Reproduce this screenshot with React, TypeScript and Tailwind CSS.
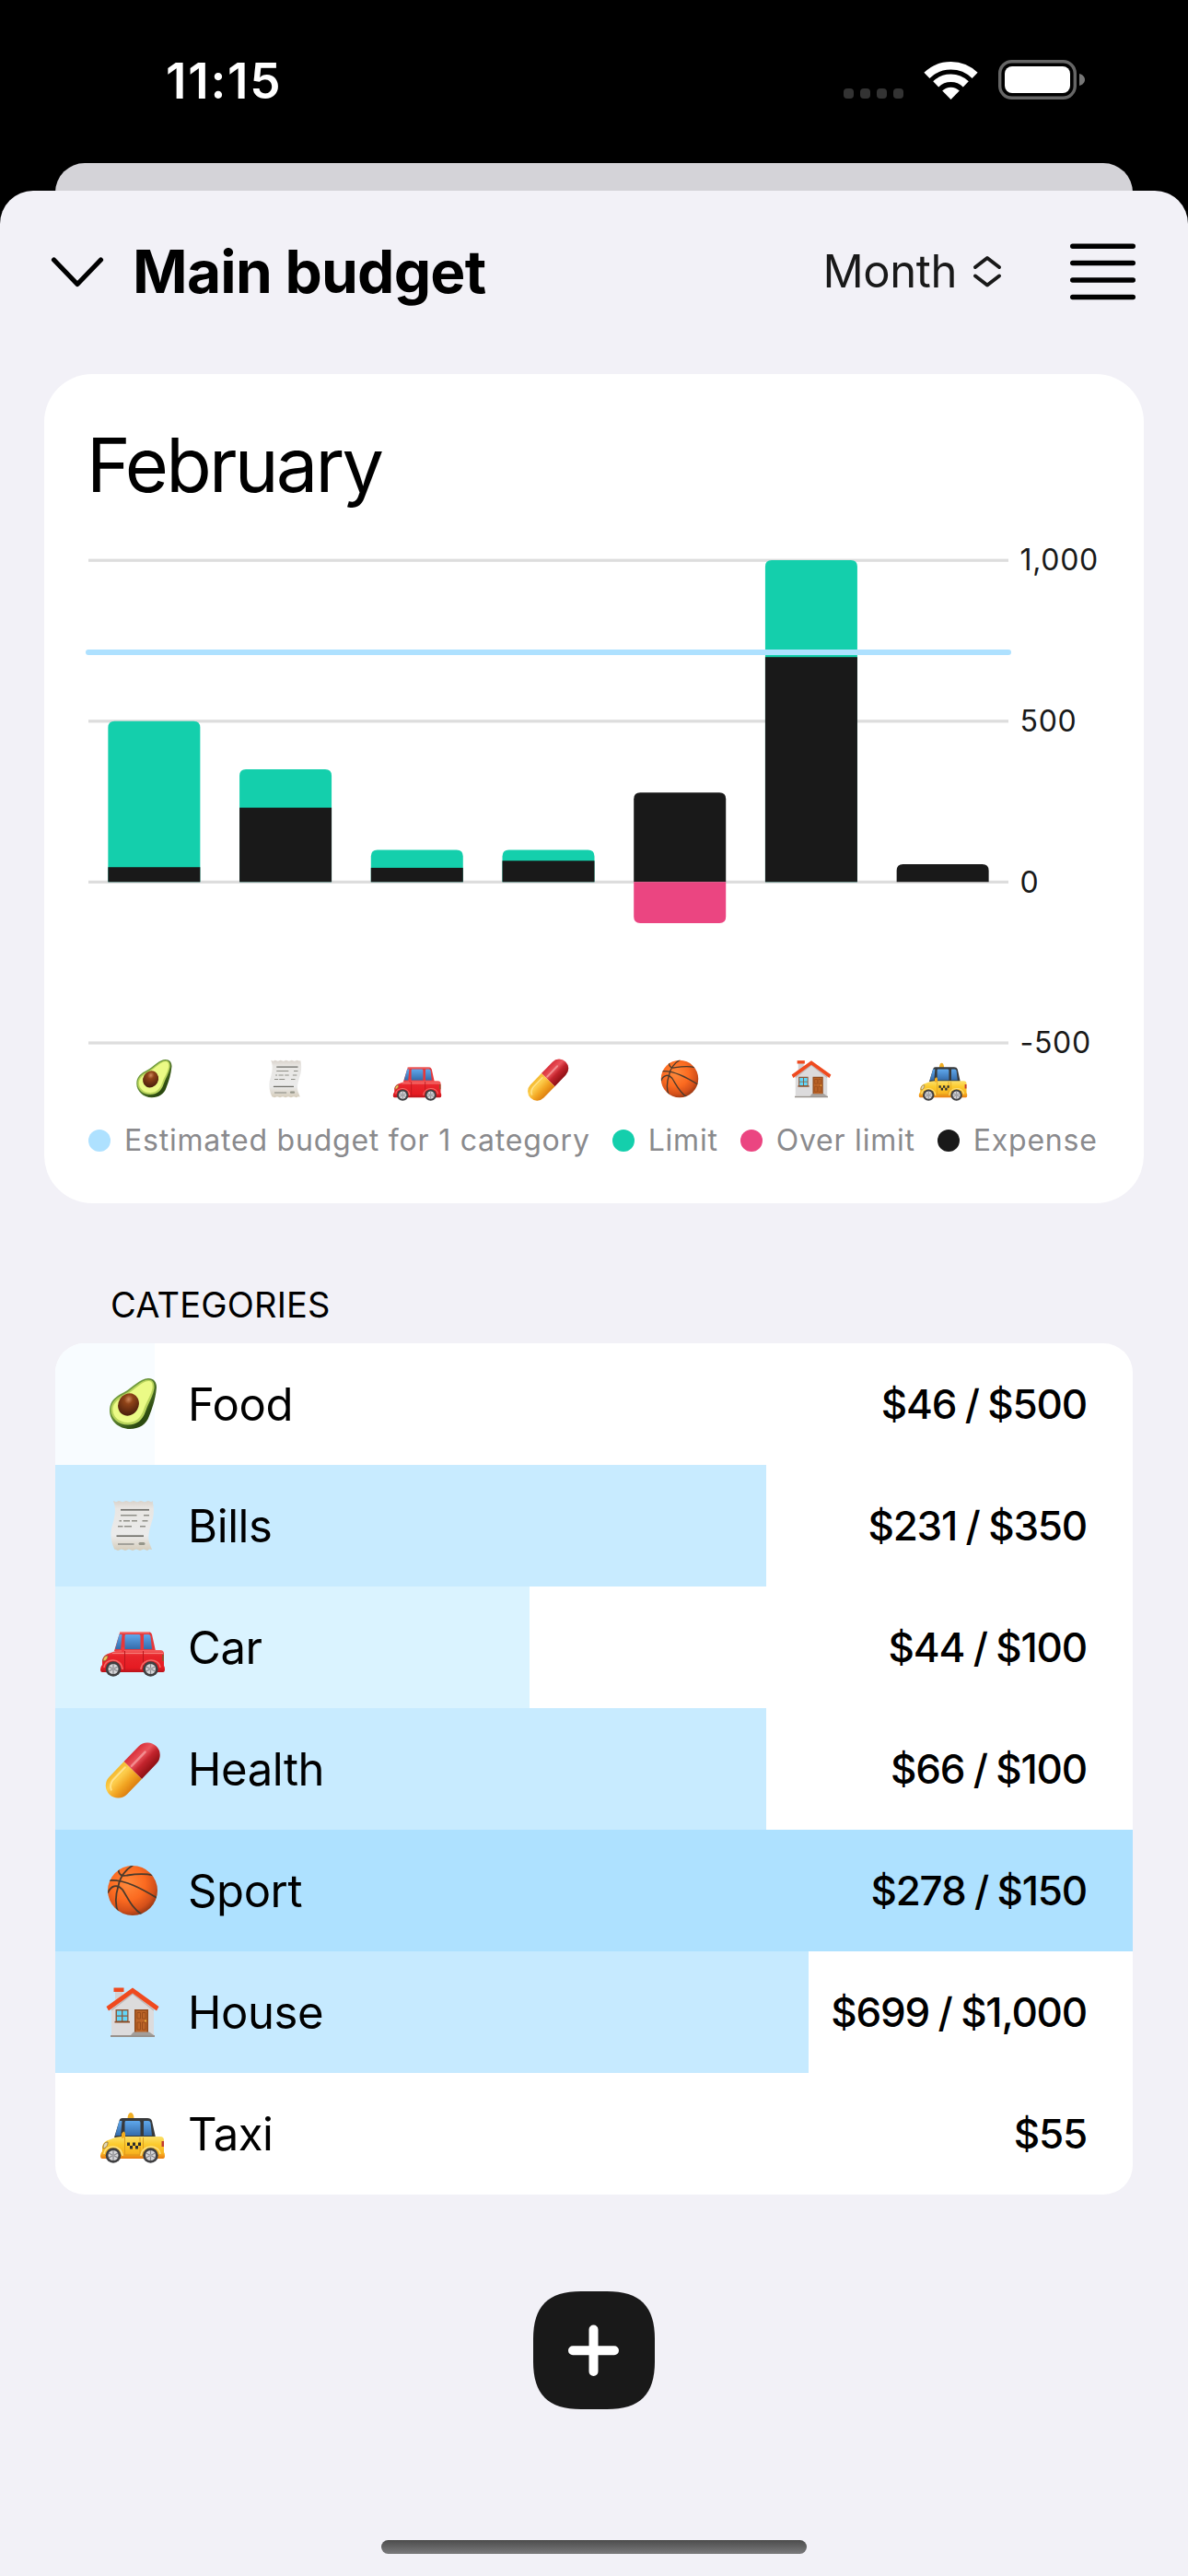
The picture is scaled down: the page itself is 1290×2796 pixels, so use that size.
import type { ReactNode } from "react";
import { clsx } from "clsx";

type IconProps = {
    className?: string
}

type Category = {
    name: string
    spent: number
    limit?: number
    tint: string
    Icon: (props: IconProps) => ReactNode
}

const AvocadoIcon = ({ className }: IconProps) => (
    <svg viewBox="0 0 72 72" className={className}>
        <defs>
            <radialGradient id="avocadoPit" cx="0.38" cy="0.3" r="0.7">
                <stop offset="0" stopColor="#d08a5c" />
                <stop offset="0.3" stopColor="#8f4318" />
                <stop offset="1" stopColor="#4c1f0c" />
            </radialGradient>
            <linearGradient id="avocadoSkin" x1="0" y1="0" x2="1" y2="1">
                <stop offset="0.35" stopColor="#6f9a3d" />
                <stop offset="0.75" stopColor="#2c4a10" />
            </linearGradient>
        </defs>
        <path d="M53 8C59 8 62 12 62 18C61 29 58 39 54 49C51 58 43 63 33 63C21 63 11 54 11 43C11 33 17 28 27 23C36 18 44 8 53 8Z" fill="url(#avocadoSkin)" />
        <path d="M53 9.5C58 9.5 60 13 59.500 19C58 28 53 35 50 44C47 53 41 58.500 31 58.500C20 58.500 12.500 51 12.500 42.500C12.500 34 18 29.500 28 24.500C37 19.500 45 9.500 53 9.500Z" fill="#b9d45c" />
        <path d="M53 11C57 11 58 14 57.500 19C56 27 50.500 34 48 42C45 51 39 56 31 56C21 56 14.500 49.500 14.500 42C14.500 35 20 31 29 26C38 21 46 11 53 11Z" fill="#ebfa86" />
        <ellipse cx="31.500" cy="36.500" rx="11" ry="12.500" transform="rotate(30 31.500 36.500)" fill="url(#avocadoPit)" />
    </svg>
)

const ReceiptIcon = ({ className }: IconProps) => (
    <svg viewBox="0 0 72 72" className={className}>
        <defs>
            <linearGradient id="receiptPaper" x1="0" y1="0" x2="0" y2="1">
                <stop offset="0" stopColor="#d9d2ca" />
                <stop offset="0.15" stopColor="#e8e6e3" />
                <stop offset="0.7" stopColor="#ebebeb" />
                <stop offset="1" stopColor="#d5ccba" />
            </linearGradient>
        </defs>
        <path d="M15 9l3 1.300 3-1.300 4 1.300 4-1.300 4 1.300 4-1.300 4 1.300 4-1.300 4 1.300 4-1.300 3.500 1.300L57.500 9C59 15 59.500 21 58 28C55 38 52 46 54 54L57 62L54 61.500 52 63l-4-1.500-4 1.500-4-1.500-4 1.500-4-1.500-4 1.500-4-1.500-4 1.500-3.500-1.500L17 63C13 55 11.500 47 13 39C16 29 19 19 15 9Z" fill="url(#receiptPaper)" />
        <g stroke="#8f8f88" strokeWidth="1.500">
            <path d="M23 18.800H54" stroke="#6f6f69" strokeWidth="1.700" />
            <path d="M23 24.700H40.500M48 24.700H54" />
            <path d="M21.500 30.700H24M26 30.700H33M35 30.700H41M46.500 30.700H52.500" />
            <path d="M20 36.700H25.500M27 36.700H35M44 36.700H50" />
            <path d="M18.500 47.200H48" stroke="#6f6f69" strokeWidth="1.700" />
            <path d="M20 56H37.500" />
        </g>
        <rect x="42.500" y="54" width="7" height="3" rx="1.500" fill="#96968a" />
    </svg>
)

// Shared by the private car and the taxi, only colours and roof details differ
const Wheels = () => (
    <>
        {[15, 55.5].map((x) => (
            <g key={x}>
                <circle cx={x} cy="59.500" r="8.300" fill="#3f3f41" />
                <circle cx={x} cy="59.500" r="5.500" fill="#d6d6d9" />
                <path d={`M${x} 54V65M${x - 5} 57L${x + 5} 62M${x - 5} 62L${x + 5} 57`} stroke="#88888c" strokeWidth="1.200" />
                <circle cx={x} cy="59.500" r="1.800" fill="#a5a5a9" />
            </g>
        ))}
    </>
)

const CarWindows = () => (
    <>
        <path d="M21.500 22H24.500L23 38H17Z" fill="url(#carGlass)" />
        <path d="M28.500 22H43Q44.500 22 44.500 24V38H27.500V24Q27.500 22 28.500 22Z" fill="url(#carGlass)" />
        <path d="M48.500 22H53Q55 22 55.500 24L57 38H48V24Q48 22 48.500 22Z" fill="url(#carGlass)" />
    </>
)

const CarIcon = ({ className }: IconProps) => (
    <svg viewBox="0 0 72 72" className={className}>
        <defs>
            <linearGradient id="carGlass" x1="0" y1="0" x2="0" y2="1">
                <stop offset="0" stopColor="#5fa8ec" />
                <stop offset="1" stopColor="#356cab" />
            </linearGradient>
            <linearGradient id="carBody" x1="0" y1="0" x2="0" y2="1">
                <stop offset="0" stopColor="#f4605f" />
                <stop offset="0.25" stopColor="#e8262c" />
                <stop offset="0.8" stopColor="#e51b22" />
                <stop offset="1" stopColor="#b8131a" />
            </linearGradient>
        </defs>
        <path d="M25 19H52Q56 19 57 22L61 40H16L21.500 22Q22 19 25 19Z" fill="#e5383b" />
        <path d="M22 19.800H54" stroke="#f58b88" strokeWidth="1.500" />
        <CarWindows />
        <path d="M12 42Q18 39 24 39H66Q70 39 70 43V56Q71 57 71 60Q71 63 69 63H3Q1 63 1 60Q1 57 3 55V50Q4 44 12 42Z" fill="url(#carBody)" />
        <path d="M14 42.500H69" stroke="#f77d78" strokeWidth="1.200" />
        <path d="M27.500 40V61M47.500 40V61" stroke="#b9161c" strokeWidth="1" />
        <path d="M5 58C6 47 24 47 25 60M45 60C46 47 65 47 66 58" fill="none" stroke="#f26a66" strokeWidth="1.500" />
        <path d="M24 36h3v5h-3z" fill="#f03a3f" />
        <path d="M4 51C4 47 6 45 9 45C9.500 48 7 51 4 51Z" fill="#f2c75a" stroke="#7f5a3a" strokeWidth="0.800" />
        <path d="M68 44H70V51H68Z" fill="#97502b" />
        <Wheels />
    </svg>
)

const PillIcon = ({ className }: IconProps) => (
    <svg viewBox="0 0 72 72" className={className}>
        <defs>
            <linearGradient id="pillRed" x1="0" y1="0" x2="1" y2="0">
                <stop offset="0" stopColor="#d9303a" />
                <stop offset="0.350" stopColor="#ea555c" />
                <stop offset="0.600" stopColor="#c3242d" />
                <stop offset="1" stopColor="#8f1014" />
            </linearGradient>
            <linearGradient id="pillYellow" x1="0" y1="0" x2="1" y2="0">
                <stop offset="0" stopColor="#f4b92f" />
                <stop offset="0.300" stopColor="#fdce4d" />
                <stop offset="0.650" stopColor="#f2a522" />
                <stop offset="1" stopColor="#dd7f10" />
            </linearGradient>
        </defs>
        <g transform="rotate(44 36.250 37.500)">
            <path d="M22.750 37.500V14.500A13.500 13.500 0 0 1 49.750 14.500V37.500Z" fill="url(#pillRed)" />
            <path d="M22.750 37.500H49.750V60.500A13.500 13.500 0 0 1 22.750 60.500Z" fill="url(#pillYellow)" />
            <path d="M32 14V35" stroke="#f28d90" strokeWidth="2.500" strokeLinecap="round" />
            <path d="M28 41V60Q29 67 34 69" fill="none" stroke="#ffe28a" strokeWidth="2" strokeLinecap="round" />
        </g>
    </svg>
)

const BasketballIcon = ({ className }: IconProps) => (
    <svg viewBox="0 0 72 72" className={className}>
        <defs>
            <radialGradient id="ballSkin" cx="0.400" cy="0.350" r="0.700">
                <stop offset="0" stopColor="#ff8a3c" />
                <stop offset="0.500" stopColor="#fb6a20" />
                <stop offset="0.800" stopColor="#d4501a" />
                <stop offset="1" stopColor="#8f3412" />
            </radialGradient>
            <clipPath id="ballClip">
                <circle cx="36" cy="36" r="27" />
            </clipPath>
        </defs>
        <circle cx="36" cy="36" r="27" fill="url(#ballSkin)" />
        <g clipPath="url(#ballClip)" fill="none" stroke="#4a3a2c" strokeWidth="1.800">
            <path d="M37 8C27 14 22 23 20.500 31C17 42 17 52 20.500 60" />
            <path d="M11 25C28 24 46 34 64 45" />
            <path d="M20.500 13C21 19 24 21 30 19.500C40 18 50 17.500 58 19.500" />
            <path d="M9 39C12 31 19 28 25 35C31 44 35 55 46 62" />
        </g>
    </svg>
)

const HouseIcon = ({ className }: IconProps) => (
    <svg viewBox="0 0 72 72" className={className}>
        <path d="M17 13H25V30H17Z" fill="#d3d2d3" />
        <path d="M15.500 9.500H26.500V14H15.500Z" fill="#ef4a1f" />
        <path d="M13 31L36 13L59 31V61H13Z" fill="#dcdbdc" />
        <path d="M13 34L36 16L59 34" fill="none" stroke="#bdb9ba" strokeWidth="1.500" />
        <path d="M7.500 30L36 9.500L64.500 30L62 34.500L36 15.500L10 34.500Z" fill="#ef4a1f" />
        <path d="M17.500 33H31.500V47H17.500Z" fill="#8b5a3c" />
        <path d="M19 34.500H24V39.500H19ZM25.300 34.500H30.200V39.500H25.300ZM19 40.800H24V45.500H19ZM25.300 40.800H30.200V45.500H25.300Z" fill="#62d6f8" />
        <path d="M16.500 45.800H33V47.500H16.500Z" fill="#8a4b25" />
        <path d="M38 33H53V58H38Z" fill="#8f4a1c" />
        <path d="M39.500 34.500H51.500V58H39.500Z" fill="#bd6529" />
        <path d="M41 36.500H44.500V43H41ZM46.500 36.500H50V43H46.500ZM41 47H44.500V55H41ZM46.500 47H50V55H46.500Z" fill="none" stroke="#95491a" strokeWidth="0.900" />
        <circle cx="50" cy="45.500" r="0.900" fill="#f5c443" />
        <path d="M37 57.500H54L59 61H34Z" fill="#a39e9a" />
        <path d="M12 61H60V63H12Z" fill="#98928d" />
    </svg>
)

const TaxiIcon = ({ className }: IconProps) => (
    <svg viewBox="0 0 72 72" className={className}>
        <defs>
            <linearGradient id="taxiBody" x1="0" y1="0" x2="0" y2="1">
                <stop offset="0" stopColor="#fbe06a" />
                <stop offset="0.350" stopColor="#fbcb2f" />
                <stop offset="0.750" stopColor="#f8b421" />
                <stop offset="1" stopColor="#e87c12" />
            </linearGradient>
        </defs>
        <path d="M30.500 19.500Q31 13 34 13Q37 13 37.500 19.500Z" fill="#f0ae25" />
        <path d="M25 19H52Q56 19 57 22L61 40H16L21.500 22Q22 19 25 19Z" fill="#37393b" />
        <CarWindows />
        <path d="M12 42Q18 39 24 39H66Q70 39 70 43V56Q71 57 71 60Q71 63 69 63H3Q1 63 1 60Q1 57 3 55V50Q4 44 12 42Z" fill="url(#taxiBody)" />
        <path d="M27.500 40V59H44V40M47.500 40V61" fill="none" stroke="#d99a1c" strokeWidth="0.900" />
        <path d="M5 58C6 47 24 47 25 60M45 60C46 47 65 47 66 58" fill="none" stroke="#fde27c" strokeWidth="1.500" />
        <path d="M30 45.500h3v3.500h-3zM36 45.500h3v3.500h-3zM42 45.500h3v3.500h-3zM33 49h3v3.500h-3zM39 49h3v3.500h-3z" fill="#2c2c2e" />
        <path d="M24 36q3-5 4 0v4l-4 1z" fill="#f3ac1d" />
        <path d="M4 52C4 47 6 45 9 45C9.500 48 7 52 4 52Z" fill="#e3d9b8" stroke="#8a6a35" strokeWidth="0.800" />
        <path d="M67.500 44H70V50H67.500Z" fill="#c23a30" />
        <Wheels />
    </svg>
)

const categories: Category[] = [
    { name: "Food", spent: 46, limit: 500, tint: "bg-[#f8fcff]", Icon: AvocadoIcon },
    { name: "Bills", spent: 231, limit: 350, tint: "bg-[#c8ebff]", Icon: ReceiptIcon },
    { name: "Car", spent: 44, limit: 100, tint: "bg-[#daf3ff]", Icon: CarIcon },
    { name: "Health", spent: 66, limit: 100, tint: "bg-[#c8ebff]", Icon: PillIcon },
    { name: "Sport", spent: 278, limit: 150, tint: "bg-[#aee1ff]", Icon: BasketballIcon },
    { name: "House", spent: 699, limit: 1000, tint: "bg-[#c6eaff]", Icon: HouseIcon },
    { name: "Taxi", spent: 55, tint: "bg-white", Icon: TaxiIcon },
]

const legend = [
    { label: "Estimated budget for 1 category", dot: "bg-[#aee1ff]" },
    { label: "Limit", dot: "bg-[#14cfac]" },
    { label: "Over limit", dot: "bg-[#eb4581]" },
    { label: "Expense", dot: "bg-[#191919]" },
]

const money = (value: number) => `$${value.toLocaleString("en-US")}`

const StatusBar = () => (
    <div className="flex h-[177px] items-start justify-between pt-[58px] pr-[112px] pl-[180px] text-white">
        <span className="text-[53px] leading-[61px] font-semibold tracking-[1.8px]">11:15</span>
        <div className="flex h-[57px] items-center">
            <div className="mt-[29px] flex gap-[7px]">
                {[0, 1, 2, 3].map((i) => (
                    <span key={i} className="size-[11px] rounded-[4px] bg-[#333333]" />
                ))}
            </div>
            <svg viewBox="0 0 59 42" className="ml-[22px] h-[42px] w-[59px]">
                <g fill="none" stroke="white" strokeWidth="8.600">
                    <path d="M3.400 15.900A37.300 37.300 0 0 1 55.600 15.900" />
                    <path d="M13.200 25.400A23.300 23.300 0 0 1 45.800 25.400" />
                </g>
                <path d="M20.200 32.600A13.300 13.300 0 0 1 38.800 32.600L29.500 42Z" fill="white" />
            </svg>
            <svg viewBox="0 0 94 43" className="ml-[22px] h-[43px] w-[94px]">
                <rect x="1.700" y="1.700" width="81.600" height="39.600" rx="13" fill="none" stroke="#666666" strokeWidth="3.400" />
                <rect x="7" y="7" width="71" height="29" rx="8" fill="white" />
                <path d="M88 15C92 16 94 19 94 21.500C94 24 92 27 88 28Z" fill="#777777" />
            </svg>
        </div>
    </div>
)

const Header = () => (
    <header className="flex h-[176px] items-center pr-[57px] pl-[55px]">
        <svg viewBox="0 0 58 34" className="h-[34px] w-[58px]">
            <path d="M3.500 4L29 30.500L54.500 4" fill="none" stroke="black" strokeWidth="5.200" strokeLinecap="round" strokeLinejoin="round" />
        </svg>
        <h1 className="ml-[31px] text-[64px] leading-[76px] font-bold tracking-[-0.75px] text-black">Main budget</h1>
        <div className="ml-auto flex items-center">
            <span className="text-[49px] leading-[60px] tracking-[-0.4px] text-[#191919]">Month</span>
            <svg viewBox="0 0 32 36" className="ml-[17px] h-[36px] w-[32px]" fill="none" stroke="#191919" strokeWidth="4" strokeLinecap="round" strokeLinejoin="round">
                <path d="M3 13L16 3L29 13" />
                <path d="M3 22.500L16 32.500L29 22.500" />
            </svg>
            <svg viewBox="0 0 71 62" className="ml-[74px] h-[62px] w-[71px]" stroke="black" strokeWidth="5.500" strokeLinecap="round">
                <path d="M2.750 3.200H68.250M2.750 21.600H68.250M2.750 40H68.250M2.750 58.400H68.250" />
            </svg>
        </div>
    </header>
)

const PLOT_WIDTH = 999
const ZERO_Y = 412.3
const PX_PER_UNIT = 0.3492
const BAR_WIDTH = 100
const ESTIMATE_Y = 163

const yOf = (value: number) => ZERO_Y - value * PX_PER_UNIT

// Bar with only its top corners rounded
const barPath = (x: number, top: number, bottom: number) =>
    `M${x} ${bottom}V${top + 7}q0 -7 7 -7H${x + BAR_WIDTH - 7}q7 0 7 7V${bottom}Z`

const BudgetChart = () => {
    const ticks = [
        { value: 1000, label: "1,000" },
        { value: 500, label: "500" },
        { value: 0, label: "0" },
        { value: -500, label: "-500" },
    ]
    const step = PLOT_WIDTH / categories.length

    return (
        <svg viewBox="0 0 1106 599" className="h-[599px] w-[1106px] overflow-visible">
            {ticks.map((tick) => (
                <g key={tick.value}>
                    <rect x="0" y={yOf(tick.value) - 1.5} width={PLOT_WIDTH} height="3.200" fill="#dddddd" />
                    <text x="1011.5" y={yOf(tick.value) + 11.3} className="fill-[#191919] text-[32px] tracking-[0.7px]">{tick.label}</text>
                </g>
            ))}
            {categories.map(({ name, spent, limit = 0 }, i) => {
                const x = i * step + (step - BAR_WIDTH) / 2
                const over = limit > 0 && spent > limit
                return (
                    <g key={name}>
                        {limit > spent && <path d={barPath(x, yOf(limit), ZERO_Y)} fill="#14cfac" />}
                        {limit > spent
                            ? <rect x={x} y={yOf(spent)} width={BAR_WIDTH} height={spent * PX_PER_UNIT} fill="#191919" />
                            : <path d={barPath(x, yOf(spent), ZERO_Y)} fill="#191919" />}
                        {over && (
                            <path d={`M${x} ${ZERO_Y}V${yOf(limit - spent) - 7}q0 7 7 7H${x + BAR_WIDTH - 7}q7 0 7 -7V${ZERO_Y}Z`} fill="#eb4581" />
                        )}
                    </g>
                )
            })}
            <path d={`M0 ${ESTIMATE_Y}H${PLOT_WIDTH}`} stroke="#aee1ff" strokeWidth="6" strokeLinecap="round" />
        </svg>
    )
}

const ChartCard = () => (
    <section className="mx-[48px] mt-[23px] h-[900px] rounded-[52px] bg-white px-[48px] pt-[59px]">
        <h2 className="-ml-[2px] text-[81px] leading-[80px] tracking-[-2.8px] text-black">February</h2>
        <BudgetChart />
        <div className="grid h-[54px] w-[999px] grid-cols-7 justify-items-center">
            {categories.map(({ name, Icon }) => (
                <Icon key={name} className="size-[54px]" />
            ))}
        </div>
        <div className="mt-[20px] flex h-[40px] items-center gap-[24px]">
            {legend.map((item) => (
                <div key={item.label} className="flex items-center gap-[15px]">
                    <span className={clsx("size-[24px] rounded-full", item.dot)} />
                    <span className="text-[32px] leading-[40px] tracking-[0.78px] whitespace-nowrap text-[#8a8a8d]">{item.label}</span>
                </div>
            ))}
        </div>
    </section>
)

const CategoryRow = ({ name, spent, limit, tint, Icon }: Category) => {
    const progress = limit ? Math.min(spent / limit, 1) * 100 : 0

    return (
        <li className="relative flex h-[132px] items-center justify-between pr-[50px] pl-[48px]">
            <div className={clsx("absolute inset-y-0 left-0", tint)} style={{ width: `${progress}%` }} />
            <div className="relative flex items-center gap-[24px]">
                <Icon className="size-[72px]" />
                <span className="pt-[2px] text-[49px] leading-[60px] tracking-[-0.4px] text-black">{name}</span>
            </div>
            <span className="relative text-[44px] leading-[60px] font-medium tracking-[-1.2px] [word-spacing:-1px] text-black">
                {limit ? `${money(spent)} / ${money(limit)}` : money(spent)}
            </span>
        </li>
    )
}

const AddButton = () => (
    <button aria-label="Add" className="mt-[105px] self-center">
        <svg viewBox="0 0 132 128" className="block h-[128px] w-[132px]">
            <path d="M52 0H80C116 0 132 16 132 52V76C132 112 116 128 80 128H52C16 128 0 112 0 76V52C0 16 16 0 52 0Z" fill="#191919" />
            <path d="M43 64.250H88M65.500 41.500V87" stroke="white" strokeWidth="10" strokeLinecap="round" />
        </svg>
    </button>
)

const App = () => {
    return (
        <div className="flex h-[2796px] w-[1290px] flex-col overflow-hidden bg-black font-['Inter','Liberation_Sans',sans-serif]">
            <StatusBar />
            <div className="mx-[60px] -mb-[40px] h-[70px] shrink-0 rounded-t-[32px] bg-[#d4d3d8]" />
            <main className="relative flex flex-1 flex-col rounded-t-[36px] bg-[#f2f1f7]">
                <Header />
                <ChartCard />
                <h3 className="mt-[90px] ml-[120px] text-[38px] leading-[40px] tracking-[0.2px] text-black">CATEGORIES</h3>
                <ul className="mx-[60px] mt-[22px] overflow-hidden rounded-[32px] bg-white">
                    {categories.map((category) => (
                        <CategoryRow key={category.name} {...category} />
                    ))}
                </ul>
                <AddButton />
                <div className="mt-[142px] h-[15px] w-[462px] self-center rounded-full bg-linear-to-b from-[#4c4c4c] to-[#7b7b7d]" />
            </main>
        </div>
    )
}

export default App;
